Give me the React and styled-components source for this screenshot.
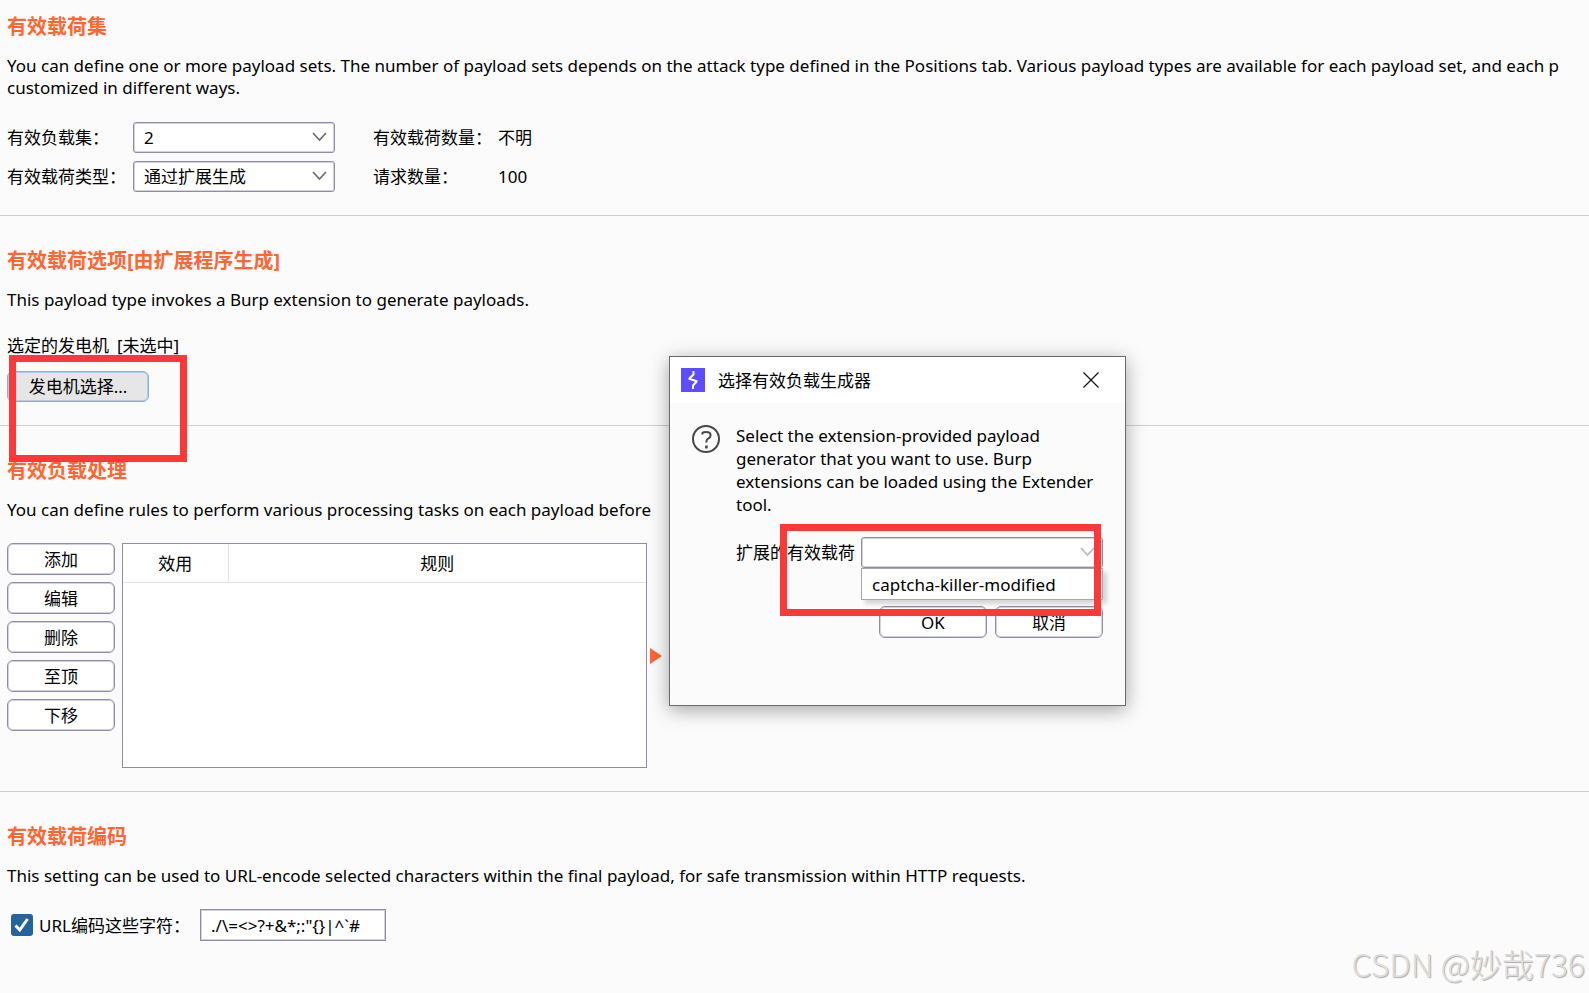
import React from "react";
import styled, { createGlobalStyle } from "styled-components";

const orange = "#ff6633";
const line = "#8f8da3";
const lineSoft = "#d3d2dc";
const red = "#fd3838";

const ruleActions = ["添加", "编辑", "删除", "至顶", "下移"];

function Chevron({ color = "#6e6e6e" }) {
  return (
    <ChevronIcon viewBox="0 0 16 10" fill="none" stroke={color} strokeWidth="1.8" aria-hidden="true">
      <path d="m1 1 6.500 7L14 1" />
    </ChevronIcon>
  );
}

function Combo({ id, value, color, children }) {
  return (
    <ComboBox>
      <Select id={id} defaultValue={value}>
        <option value={value}>{value}</option>
      </Select>
      <Chevron color={color} />
      {children}
    </ComboBox>
  );
}

function GeneratorDialog() {
  return (
    <Dialog role="dialog" aria-labelledby="dialog-title">
      <TitleBar>
        <Logo viewBox="0 0 24 24" aria-hidden="true">
          <path fill="#5c4dff" d="M0 0h24v24H0z" />
          <path
            fill="none"
            stroke="#fff"
            strokeWidth="2"
            strokeLinejoin="bevel"
            d="M12.5 3v3.5L8 10.800l8 2.400-4 4.300V21"
          />
        </Logo>
        <DialogTitle id="dialog-title">选择有效负载生成器</DialogTitle>
        <CloseButton type="button" aria-label="关闭">
          <svg width="16" height="16" viewBox="0 0 16 16" stroke="#111" strokeWidth="1.2" aria-hidden="true">
            <path d="m.5.5 15 15M15.5.5l-15 15" />
          </svg>
        </CloseButton>
      </TitleBar>
      <DialogBody>
        <HelpIcon viewBox="0 0 28 28" fill="none" stroke="#484848" strokeWidth="2" aria-hidden="true">
          <circle cx="14" cy="14" r="13" />
          <path d="M10.4 9.600V8q1-1 3.600-1 4.600 0 4.600 3.200 0 2-2.200 3.200-2 1-2 3.400v.8" />
          <path d="M14.4 20.500v3" strokeWidth="2.600" />
        </HelpIcon>
        <DialogContent>
          <p>
            Select the extension-provided payload generator that you want to use. Burp extensions can be loaded
            using the Extender tool.
          </p>
          <Field>
            <label htmlFor="generator">扩展的有效载荷</label>
            <Combo id="generator" value="" color="#b9b9b9">
              <Popup role="listbox">
                <li role="option" aria-selected="false">captcha-killer-modified</li>
              </Popup>
              <FieldMark />
            </Combo>
          </Field>
          <DialogActions>
            <Button type="button">OK</Button>
            <Button type="button">取消</Button>
          </DialogActions>
        </DialogContent>
      </DialogBody>
    </Dialog>
  );
}

export default function App() {
  return (
    <Page>
      <GlobalStyle />
      <Section $first>
        <Title>有效载荷集</Title>
        <Description>
          You can define one or more payload sets. The number of payload sets depends on the attack type defined in
          the Positions tab. Various payload types are available for each payload set, and each p
          <br />
          customized in different ways.
        </Description>
        <PayloadGrid>
          <label htmlFor="payload-set">有效负载集：</label>
          <Combo id="payload-set" value="2" />
          <span>有效载荷数量：</span>
          <span>不明</span>
          <label htmlFor="payload-type">有效载荷类型：</label>
          <Combo id="payload-type" value="通过扩展生成" />
          <span>请求数量：</span>
          <span>100</span>
        </PayloadGrid>
      </Section>

      <Section>
        <Title>有效载荷选项[由扩展程序生成]</Title>
        <Description>This payload type invokes a Burp extension to generate payloads.</Description>
        <Selected>
          <span>选定的发电机</span>
          <span>[未选中]</span>
        </Selected>
        <Picker>
          <Button type="button" $focused>发电机选择...</Button>
          <PickerMark />
        </Picker>
      </Section>

      <Section>
        <Title>有效负载处理</Title>
        <Description>You can define rules to perform various processing tasks on each payload before</Description>
        <Rules>
          <RuleActions>
            {ruleActions.map((name) => (
              <Button key={name} type="button">{name}</Button>
            ))}
          </RuleActions>
          <TableFrame>
            <RuleTable>
              <thead>
                <tr>
                  <th>效用</th>
                  <th>规则</th>
                </tr>
              </thead>
            </RuleTable>
          </TableFrame>
          <Arrow viewBox="0 0 12 16" aria-hidden="true">
            <path fill={orange} d="M0 0l12 8-12 8z" />
          </Arrow>
        </Rules>
      </Section>

      <Section $last>
        <Title>有效载荷编码</Title>
        <Description>
          This setting can be used to URL-encode selected characters within the final payload, for safe transmission
          within HTTP requests.
        </Description>
        <Encoding>
          <CheckLabel>
            <Checkbox type="checkbox" defaultChecked />
            <CheckMark viewBox="0 0 22 22" fill="none" stroke="#fff" strokeWidth="3" aria-hidden="true">
              <path d="m4.5 11.5 4.3 4.5L16.5 5" />
            </CheckMark>
            URL编码这些字符：
          </CheckLabel>
          <TextInput aria-label="URL编码字符" defaultValue={'./\\=<>?+&*;:"{}|^`#'} />
        </Encoding>
      </Section>

      <GeneratorDialog />
      <Watermark>CSDN @妙哉736</Watermark>
    </Page>
  );
}

const GlobalStyle = createGlobalStyle`
  * {
    box-sizing: border-box;
  }
  body {
    margin: 0;
    background: #fbfbfb;
  }
  body, button, input, select {
    font-family: "Noto Sans", "Noto Sans CJK SC", sans-serif;
    font-size: 17px;
    line-height: 23px;
    color: #000;
  }
  p {
    margin: 0;
  }
`;

const Page = styled.main`
  position: relative;
  min-height: 100vh;
  overflow: hidden;
`;

const Section = styled.section`
  padding: ${({ $first }) => ($first ? 13 : 31)}px 7px 23px;
  border-bottom: ${({ $last }) => ($last ? "none" : "1px solid #cfcfcf")};
`;

const Title = styled.h2`
  margin: 0 0 14px;
  font-size: 20px;
  line-height: 28px;
  font-weight: 700;
  color: ${orange};
`;

const Description = styled.p`
  padding-bottom: 22px;
  line-height: 22px;
  white-space: nowrap;
`;

const PayloadGrid = styled.div`
  display: grid;
  grid-template-columns: 126px 202px 125px auto;
  grid-auto-rows: 31px;
  row-gap: 8px;
  align-items: center;
  margin-top: 1px;
  > span {
    margin-left: 38px;
    white-space: nowrap;
  }
`;

const ComboBox = styled.div`
  position: relative;
  height: 31px;
`;

const Select = styled.select`
  display: block;
  width: 100%;
  height: 100%;
  padding: 0 30px 0 10px;
  appearance: none;
  border: 1px solid ${line};
  border-radius: 3px;
  background: #fff;
  box-shadow: inset 0 0 0 1px ${lineSoft};
`;

const ChevronIcon = styled.svg`
  position: absolute;
  top: 10px;
  right: 7px;
  width: 16px;
  height: 10px;
  pointer-events: none;
`;

const Button = styled.button`
  width: 108px;
  height: 32px;
  padding: 0;
  border: 1px solid ${({ $focused }) => ($focused ? "#87afda" : line)};
  border-radius: 6px;
  background: ${({ $focused }) => ($focused ? "#e6e6e6" : "#fff")};
  box-shadow: inset 0 0 0 1px ${({ $focused }) => ($focused ? "#b5cbe3" : lineSoft)};
`;

const Selected = styled.div`
  display: flex;
  gap: 8px;
  margin: 1px 0 14px;
`;

const Picker = styled.div`
  position: relative;
  width: 142px;
  ${Button} {
    display: block;
    width: 100%;
    height: 31px;
  }
`;

// red frame drawn over a control to point it out
const Mark = styled.div`
  position: absolute;
  z-index: 2;
  border: 7px solid ${red};
  pointer-events: none;
`;

const PickerMark = styled(Mark)`
  top: -16px;
  left: 2px;
  width: 178px;
  height: 107px;
`;

const FieldMark = styled(Mark)`
  top: -13px;
  left: -81px;
  right: 2px;
  height: 92px;
`;

const Rules = styled.div`
  display: flex;
`;

const RuleActions = styled.div`
  display: flex;
  flex-direction: column;
  gap: 7px;
  margin-right: 7px;
`;

const TableFrame = styled.div`
  width: 525px;
  height: 225px;
  border: 1px solid ${line};
  background: #fff;
`;

const RuleTable = styled.table`
  width: 100%;
  table-layout: fixed;
  border-collapse: collapse;
  th {
    height: 38px;
    padding: 2px 0 0;
    border-bottom: 1px solid #e4e4e4;
    font-weight: 400;
  }
  th:first-child {
    width: 105px;
    border-right: 1px solid #e4e4e4;
  }
`;

const Arrow = styled.svg`
  align-self: center;
  width: 12px;
  height: 16px;
  margin-left: 3px;
`;

const Encoding = styled.div`
  display: flex;
  align-items: center;
  gap: 8px;
`;

const CheckLabel = styled.label`
  position: relative;
  display: flex;
  align-items: center;
  gap: 6px;
  width: 185px;
  padding-left: 4px;
  white-space: nowrap;
`;

const Checkbox = styled.input`
  width: 22px;
  height: 22px;
  margin: 0;
  flex: none;
  appearance: none;
  border-radius: 3px;
  background: #26639c;
`;

const CheckMark = styled.svg`
  position: absolute;
  left: 4px;
  width: 22px;
  height: 22px;
  pointer-events: none;
`;

const TextInput = styled.input`
  width: 186px;
  height: 32px;
  padding: 0 10px;
  border: 1px solid ${line};
  background: #fff;
  box-shadow: inset 0 0 0 1px ${lineSoft};
`;

const Dialog = styled.div`
  position: absolute;
  top: 356px;
  left: 669px;
  width: 457px;
  height: 350px;
  border: 1px solid #6b6b6b;
  background: #fbfbfb;
  box-shadow: 0 4px 18px rgba(0, 0, 0, 0.35);
`;

const TitleBar = styled.header`
  display: flex;
  align-items: center;
  height: 46px;
  padding: 0 26px 0 11px;
  background: #fff;
`;

const Logo = styled.svg`
  width: 24px;
  height: 24px;
`;

const DialogTitle = styled.h3`
  flex: 1;
  margin: 0 0 0 13px;
  font-size: 17px;
  font-weight: 400;
`;

const CloseButton = styled.button`
  display: flex;
  padding: 0;
  border: 0;
  background: none;
`;

const DialogBody = styled.div`
  display: flex;
  gap: 16px;
  padding: 21px 22px 0;
`;

const HelpIcon = styled.svg`
  flex: none;
  width: 28px;
  height: 28px;
  margin-top: 1px;
`;

const DialogContent = styled.div`
  flex: 1;
`;

const Field = styled.div`
  display: flex;
  align-items: center;
  gap: 6px;
  margin-top: 21px;
  white-space: nowrap;
  ${ComboBox} {
    flex: 1;
  }
`;

const Popup = styled.ul`
  position: absolute;
  z-index: 1;
  top: 31px;
  left: 0;
  right: 0;
  height: 32px;
  margin: 0;
  padding: 4px 10px;
  list-style: none;
  border: 1px solid #a9a9ad;
  background: #fff;
  box-shadow: 4px 4px 4px rgba(0, 0, 0, 0.15);
`;

const DialogActions = styled.div`
  display: flex;
  justify-content: flex-end;
  gap: 8px;
  margin-top: 38px;
`;

const Watermark = styled.div`
  position: absolute;
  right: 4px;
  bottom: 10px;
  font-family: "Noto Sans CJK SC", sans-serif;
  font-size: 32px;
  line-height: 40px;
  font-weight: 300;
  color: #dedede;
  text-shadow: 1px 1px 1px #aaa;
`;
